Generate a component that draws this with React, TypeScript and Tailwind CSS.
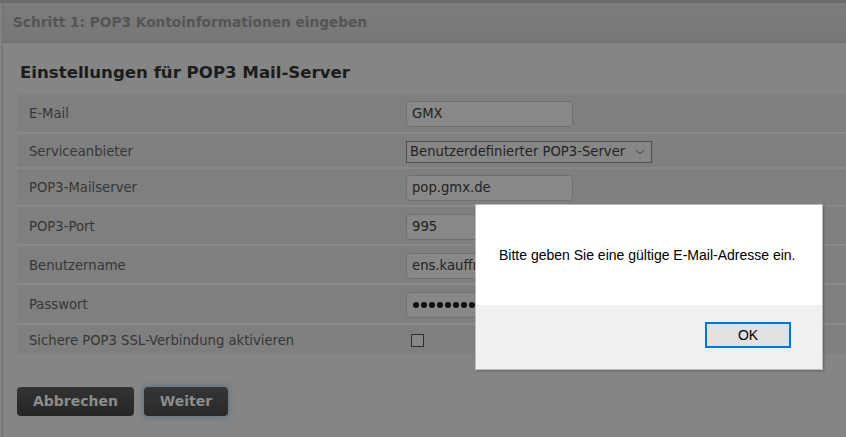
import React from 'react';

type Kind = 'text' | 'select' | 'password' | 'checkbox';

const rows: { label: string; kind: Kind; value?: string; h: string; scrolled?: boolean }[] = [
  { label: 'E-Mail', kind: 'text', value: 'GMX', h: 'h-[37px]' },
  { label: 'Serviceanbieter', kind: 'select', value: 'Benutzerdefinierter POP3-Server', h: 'h-[35px]' },
  { label: 'POP3-Mailserver', kind: 'text', value: 'pop.gmx.de', h: 'h-[38px]' },
  { label: 'POP3-Port', kind: 'text', value: '995', h: 'h-[39px]' },
  { label: 'Benutzername', kind: 'text', value: 'jens.kauffmann@gmx.de', h: 'h-[39px]', scrolled: true },
  { label: 'Passwort', kind: 'password', h: 'h-[40px]' },
  { label: 'Sichere POP3 SSL-Verbindung aktivieren', kind: 'checkbox', h: 'h-[31px]' },
];

const Field: React.FC<{ kind: Kind; value?: string; scrolled?: boolean }> = ({ kind, value, scrolled }) => {
  if (kind === 'select') {
    return (
      <div className="flex h-[22px] w-[246px] items-center justify-between border border-[#4f4f4f] bg-[#868686] pl-[3px] pr-[6px] text-[13.2px] text-[#222]">
        <span>{value}</span>
        <svg width="10" height="6" viewBox="0 0 10 6" fill="none" stroke="#3a3a3a" strokeWidth="1">
          <path d="M1 1l4 4 4-4" />
        </svg>
      </div>
    );
  }
  if (kind === 'checkbox') {
    return <div className="ml-[5px] h-[13px] w-[13px] border border-[#2e2e2e] bg-[#878787]" />;
  }
  if (kind === 'password') {
    return (
      <div className="flex h-[26px] w-[167px] items-center gap-[2px] overflow-hidden rounded-[4px] border border-[#707070] bg-[#888] pl-[6px]">
        {Array.from({ length: 12 }).map((_, i) => (
          <span key={i} className="h-[6px] w-[6px] shrink-0 rounded-full bg-[#111]" />
        ))}
      </div>
    );
  }
  return (
    <div className="flex h-[26px] w-[167px] items-center rounded-[4px] border border-[#707070] bg-[#888] pl-[5px] text-[13.2px] text-[#222]">
      <div className="flex-1 overflow-hidden whitespace-nowrap">
        <span className={scrolled ? 'ml-[-3.6px]' : ''}>{value}</span>
      </div>
    </div>
  );
};

export default function App() {
  return (
    <div className="relative h-[437px] w-[846px] overflow-hidden bg-[#828282] font-['DejaVu_Sans',sans-serif]">
      <div className="h-[3px] bg-[#6b6b6b]" />
      <div className="ml-[2px] h-[434px] border-l border-[#6f6f6f] bg-[#858585]">
        {/* step header */}
        <div className="flex h-[40px] items-center border-b border-[#6e6e6e] bg-gradient-to-b from-[#7c7c7c] to-[#777] pl-[10px] text-[13.7px] font-bold text-[#545454]">
          Schritt 1: POP3 Kontoinformationen eingeben
        </div>

        <h2 className="pl-[17px] pt-[20px] pb-[12px] text-[16.6px] leading-[20px] font-bold text-[#1c1c1c]">
          Einstellungen für POP3 Mail-Server
        </h2>

        <div className="ml-[14px] flex flex-col">
          {rows.map((r) => (
            <div key={r.label} className={`flex items-center border-t-2 border-[#888] bg-[#7f7f7f] pt-[2px] first:border-t-0 first:pt-0 ${r.h}`}>
              <div className="w-[389px] pl-[12px] text-[13.2px] text-[#363636]">{r.label}</div>
              <Field kind={r.kind} value={r.value} scrolled={r.scrolled} />
            </div>
          ))}
        </div>

        <div className="mt-[33px] ml-[14px] flex gap-[10px]">
          <button className="h-[29px] w-[117px] rounded-[4px] bg-gradient-to-b from-[#333] to-[#262626] text-[14px] font-bold text-[#8c8c8c]">
            Abbrechen
          </button>
          <button className="h-[29px] w-[84px] rounded-[4px] bg-gradient-to-b from-[#363636] to-[#2a2a2a] text-[14px] font-bold text-[#8c8c8c] shadow-[0_0_5px_2px_rgba(80,110,130,0.55)]">
            Weiter
          </button>
        </div>
      </div>

      {/* alert box */}
      <div className="absolute left-[475px] top-[204px] flex h-[166px] w-[348px] flex-col border border-[#bdbdbd] bg-white font-['Liberation_Sans',Arial,sans-serif] shadow-[1px_1px_2px_rgba(0,0,0,0.25)]">
        <div className="flex h-[100px] items-center pl-[23px] text-[14px] text-black">
          Bitte geben Sie eine gültige E-Mail-Adresse ein.
        </div>
        <div className="flex flex-1 items-start justify-end bg-[#f0f0f0] pr-[31px] pt-[17px]">
          <button className="h-[26px] w-[86px] border-2 border-[#0078d7] bg-[#e1e1e1] text-[14px] text-black">
            OK
          </button>
        </div>
      </div>
    </div>
  );
}
